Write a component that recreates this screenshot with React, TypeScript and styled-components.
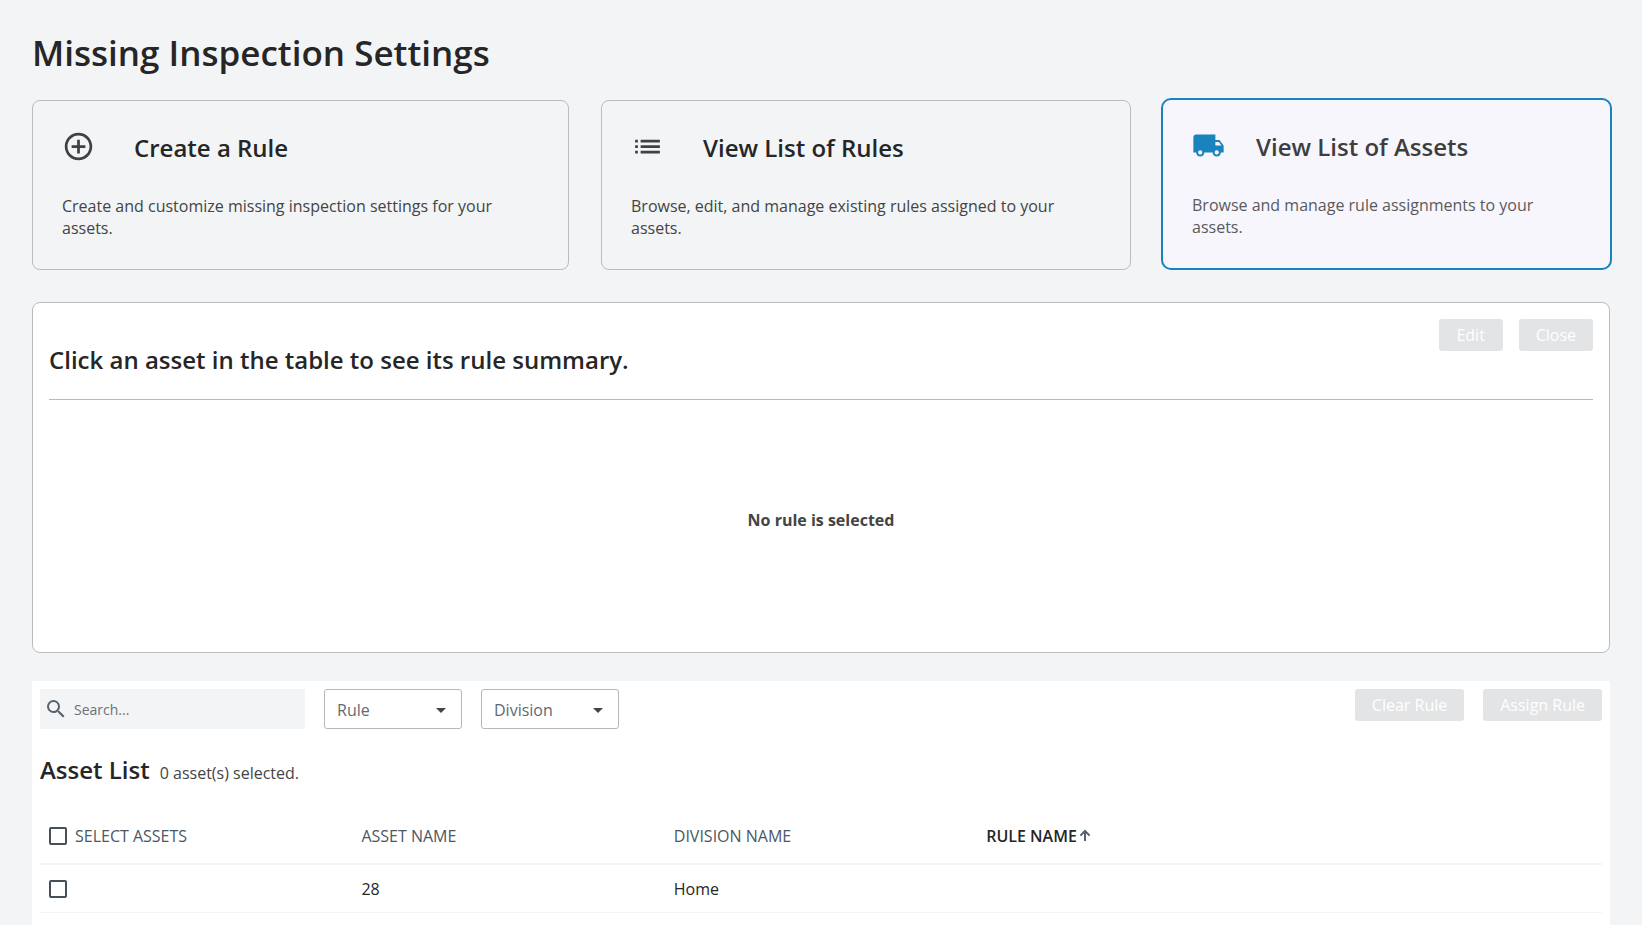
import React, { useState } from "react";
import styled, { createGlobalStyle, css } from "styled-components";
import {
  MdAddCircleOutline,
  MdArrowDropDown,
  MdList,
  MdLocalShipping,
  MdSearch,
} from "react-icons/md";

const GlobalStyle = createGlobalStyle`
  *, *::before, *::after { box-sizing: border-box; }
  body {
    margin: 0;
    background: #f2f4f6;
    color: #262626;
    font-family: "Open Sans", "Noto Sans", sans-serif;
    font-size: 16px;
    line-height: 22px;
  }
  button, input, select { font: inherit; }
`;

const Page = styled.main`
  min-height: 100vh;
  display: flex;
  flex-direction: column;
  padding: 28px 32px 0;
`;

const PageTitle = styled.h1`
  margin: 0 0 22px;
  font-size: 35px;
  font-weight: 600;
  line-height: 50px;
`;

const CardRow = styled.div`
  display: grid;
  grid-template-columns: 537fr 530fr 447fr;
  gap: 32px;
  margin-bottom: 32px;
`;

const Card = styled.button<{ $active: boolean }>`
  display: flex;
  flex-direction: column;
  gap: 29px;
  padding: 29px 29px 30px;
  border: 1px solid #b9bdc1;
  border-radius: 8px;
  background: transparent;
  color: #444;
  text-align: left;
  cursor: pointer;
  ${(p) =>
    p.$active &&
    css`
      margin: -2px -2px 0;
      border: 2px solid #1a82bc;
      border-radius: 10px;
      background: #f6f6fc;
      color: #5a5a5e;
    `}
`;

const CardHead = styled.span<{ $active: boolean; $gap: number }>`
  display: flex;
  align-items: flex-start;
  gap: ${(p) => p.$gap}px;
  height: 36px;
  svg {
    flex: none;
    color: ${(p) => (p.$active ? "#1a82bc" : "#3f4242")};
  }
`;

const CardTitle = styled.span<{ $active: boolean }>`
  font-size: 24px;
  font-weight: 600;
  line-height: 36px;
  color: ${(p) => (p.$active ? "#3e3e40" : "#262626")};
`;

const CardText = styled.span`
  min-height: 44px;
`;

const SummaryPanel = styled.section`
  display: flex;
  flex-direction: column;
  min-height: 351px;
  margin-bottom: 28px;
  padding: 16px 16px 12px;
  border: 1px solid #b9bdc1;
  border-radius: 8px;
  background: #fff;
`;

const SummaryHead = styled.header`
  display: flex;
  justify-content: space-between;
  align-items: flex-start;
  height: 81px;
  border-bottom: 1px solid #b6b8ba;
`;

const SectionTitle = styled.h2`
  margin: 0;
  font-size: 24px;
  font-weight: 600;
  line-height: 32px;
`;

const SummaryTitle = styled(SectionTitle)`
  padding-top: 25px;
`;

const ButtonRow = styled.div<{ $gap: number }>`
  display: flex;
  gap: ${(p) => p.$gap}px;
`;

const ActionButton = styled.button`
  min-width: 64px;
  height: 32px;
  padding: 0 17px;
  border: 0;
  border-radius: 3px;
  background: #e2e4e6;
  color: #fff;
`;

const EmptyMessage = styled.p`
  flex: 1;
  display: flex;
  align-items: center;
  justify-content: center;
  margin: 0;
  font-weight: 700;
  color: #444;
`;

const ListPanel = styled.section`
  flex: 1;
  padding: 8px;
  background: #fff;
`;

const Toolbar = styled.div`
  display: flex;
  justify-content: space-between;
  align-items: flex-start;
  margin-bottom: 25px;
`;

const Filters = styled.div`
  display: flex;
  gap: 19px;
`;

const SearchBox = styled.label`
  display: flex;
  align-items: center;
  gap: 6px;
  width: 265px;
  height: 40px;
  padding: 0 4px;
  background: #f2f4f6;
  color: #56616b;
  svg { flex: none; }
`;

const SearchInput = styled.input`
  flex: 1;
  min-width: 0;
  padding: 2px 0 0;
  border: 0;
  outline: 0;
  background: transparent;
  font-size: 14px;
  line-height: 20px;
  &::placeholder { color: #6b7278; opacity: 1; }
`;

const SelectBox = styled.div`
  position: relative;
  width: 138px;
  svg {
    position: absolute;
    top: 9px;
    right: 9px;
    color: #444;
    pointer-events: none;
  }
`;

const FilterSelect = styled.select`
  appearance: none;
  width: 100%;
  height: 40px;
  padding: 1px 32px 0 12px;
  border: 1px solid #b3b8bc;
  border-radius: 3px;
  background: #fff;
  color: #5f6a73;
`;

const ListHead = styled.div`
  display: flex;
  align-items: baseline;
  gap: 10px;
  margin-bottom: 23px;
  color: #444;
  ${SectionTitle} { color: #262626; }
`;

const Table = styled.table`
  width: 100%;
  table-layout: fixed;
  border-collapse: separate;
  border-spacing: 0;
`;

const HeadCell = styled.th<{ $sorted?: boolean }>`
  height: 56px;
  padding: 0 9px;
  border-bottom: 2px solid #f2f3f4;
  text-align: left;
  font-weight: ${(p) => (p.$sorted ? 600 : 400)};
  color: ${(p) => (p.$sorted ? "#262626" : "#4b5763")};
`;

const HeadLabel = styled.label`
  display: flex;
  align-items: center;
  gap: 8px;
`;

const SortButton = styled.button`
  display: flex;
  align-items: center;
  padding: 0;
  border: 0;
  background: none;
  color: inherit;
  svg { color: #56616b; }
`;

const Cell = styled.td`
  height: 48px;
  padding: 0 9px;
  border-bottom: 1px solid #f2f3f4;
`;

const Checkbox = styled.input`
  appearance: none;
  display: block;
  width: 18px;
  height: 18px;
  margin: 0;
  border: 2px solid #465059;
  border-radius: 2px;
  background: #fff;
  &:checked { background: #1a82bc; }
`;

const SortArrow = () => (
  <svg width="16" height="16" viewBox="0 0 16 16" fill="none" aria-hidden>
    <path d="M8 13V3.4M3.4 7.6L8 3l4.6 4.6" stroke="currentColor" strokeWidth="2" />
  </svg>
);

const cards = [
  {
    title: "Create a Rule",
    text: "Create and customize missing inspection settings for your assets.",
    icon: MdAddCircleOutline,
    gap: 39,
  },
  {
    title: "View List of Rules",
    text: "Browse, edit, and manage existing rules assigned to your assets.",
    icon: MdList,
    gap: 39,
  },
  {
    title: "View List of Assets",
    text: "Browse and manage rule assignments to your assets.",
    icon: MdLocalShipping,
    gap: 31,
  },
];

const assets = [{ name: "28", division: "Home", rule: "" }];

export default function App() {
  const [active, setActive] = useState(2);
  const [checked, setChecked] = useState<string[]>([]);
  const allChecked = checked.length === assets.length;

  const toggle = (name: string) =>
    setChecked((c) => (c.includes(name) ? c.filter((n) => n !== name) : [...c, name]));

  return (
    <>
      <GlobalStyle />
      <Page>
        <PageTitle>Missing Inspection Settings</PageTitle>

        <CardRow>
          {cards.map(({ title, text, icon: Icon, gap }, i) => (
            <Card
              key={title}
              type="button"
              $active={i === active}
              aria-pressed={i === active}
              onClick={() => setActive(i)}
            >
              <CardHead $active={i === active} $gap={gap}>
                <Icon size={33} aria-hidden />
                <CardTitle $active={i === active}>{title}</CardTitle>
              </CardHead>
              <CardText>{text}</CardText>
            </Card>
          ))}
        </CardRow>

        <SummaryPanel>
          <SummaryHead>
            <SummaryTitle>Click an asset in the table to see its rule summary.</SummaryTitle>
            <ButtonRow $gap={16}>
              <ActionButton type="button" disabled>Edit</ActionButton>
              <ActionButton type="button" disabled>Close</ActionButton>
            </ButtonRow>
          </SummaryHead>
          <EmptyMessage>No rule is selected</EmptyMessage>
        </SummaryPanel>

        <ListPanel>
          <Toolbar>
            <Filters>
              <SearchBox>
                <MdSearch size={24} aria-hidden />
                <SearchInput type="text" placeholder="Search..." aria-label="Search" />
              </SearchBox>
              <SelectBox>
                <FilterSelect aria-label="Rule">
                  <option>Rule</option>
                </FilterSelect>
                <MdArrowDropDown size={24} aria-hidden />
              </SelectBox>
              <SelectBox>
                <FilterSelect aria-label="Division">
                  <option>Division</option>
                </FilterSelect>
                <MdArrowDropDown size={24} aria-hidden />
              </SelectBox>
            </Filters>
            <ButtonRow $gap={19}>
              <ActionButton type="button" disabled>Clear Rule</ActionButton>
              <ActionButton type="button" disabled>Assign Rule</ActionButton>
            </ButtonRow>
          </Toolbar>

          <ListHead>
            <SectionTitle>Asset List</SectionTitle>
            <span>{checked.length} asset(s) selected.</span>
          </ListHead>

          <Table>
            <thead>
              <tr>
                <HeadCell scope="col">
                  <HeadLabel>
                    <Checkbox
                      type="checkbox"
                      checked={allChecked}
                      onChange={() => setChecked(allChecked ? [] : assets.map((a) => a.name))}
                    />
                    SELECT ASSETS
                  </HeadLabel>
                </HeadCell>
                <HeadCell scope="col">ASSET NAME</HeadCell>
                <HeadCell scope="col">DIVISION NAME</HeadCell>
                <HeadCell scope="col" $sorted aria-sort="ascending">
                  <SortButton type="button">
                    RULE NAME
                    <SortArrow />
                  </SortButton>
                </HeadCell>
                <HeadCell as="td" />
              </tr>
            </thead>
            <tbody>
              {assets.map((a) => (
                <tr key={a.name}>
                  <Cell>
                    <Checkbox
                      type="checkbox"
                      aria-label={`Select asset ${a.name}`}
                      checked={checked.includes(a.name)}
                      onChange={() => toggle(a.name)}
                    />
                  </Cell>
                  <Cell>{a.name}</Cell>
                  <Cell>{a.division}</Cell>
                  <Cell>{a.rule}</Cell>
                  <Cell />
                </tr>
              ))}
            </tbody>
          </Table>
        </ListPanel>
      </Page>
    </>
  );
}
